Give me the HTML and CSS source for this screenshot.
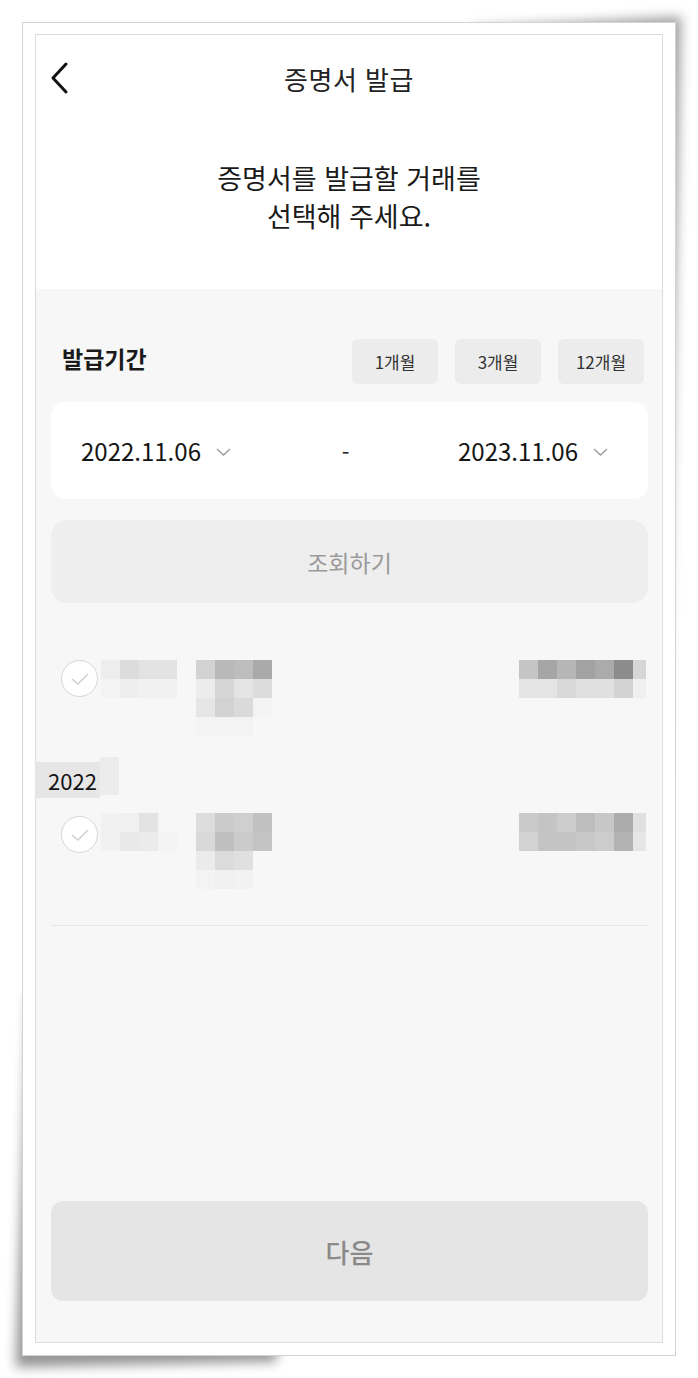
FILE: index.html
```html
<!DOCTYPE html>
<html lang="ko">
<head>
<meta charset="utf-8">
<title>증명서 발급</title>
<link rel="stylesheet" href="styles.css">
</head>
<body>
<div class="frame">
  <div class="screen">
    <header class="topbar">
      <button class="back" aria-label="뒤로">
        <svg width="20" height="32" viewBox="0 0 20 32"><path d="M16 2 L3 16 L16 30" fill="none" stroke="#111" stroke-width="3" stroke-linecap="round" stroke-linejoin="round"/></svg>
      </button>
      <h1 class="title">증명서 발급</h1>
    </header>
    <p class="intro">증명서를 발급할 거래를<br>선택해 주세요.</p>

    <section class="body">
      <div class="period-row">
        <h2 class="period-label">발급기간</h2>
        <div class="period-btns">
          <button class="chip">1개월</button>
          <button class="chip">3개월</button>
          <button class="chip">12개월</button>
        </div>
      </div>

      <div class="date-card">
        <div class="date"><span>2022.11.06</span>
          <svg class="chev" width="15" height="8" viewBox="0 0 15 8"><path d="M1 1 L7.5 7 L14 1" fill="none" stroke="#9a9a9a" stroke-width="1.3"/></svg>
        </div>
        <span class="dash">-</span>
        <div class="date"><span>2023.11.06</span>
          <svg class="chev" width="15" height="8" viewBox="0 0 15 8"><path d="M1 1 L7.5 7 L14 1" fill="none" stroke="#9a9a9a" stroke-width="1.3"/></svg>
        </div>
      </div>

      <button class="search">조회하기</button>

      <div class="list">
        <div class="item item-first">
          <span class="check"><svg width="22" height="18" viewBox="0 0 22 18"><path d="M3 9 L9 14 L19 4" fill="none" stroke="#cfcfcf" stroke-width="1.5"/></svg></span>
          <div class="mosaic m4">
            <i style="background:#ededed"></i><i style="background:#dcdcdc"></i><i style="background:#e3e3e3"></i><i style="background:#e3e3e3"></i>
            <i style="background:#f3f3f3"></i><i style="background:#eeeeee"></i><i style="background:#f1f1f1"></i><i style="background:#f1f1f1"></i>
          </div>
          <div class="mosaic m4 second">
            <i style="background:#d3d3d3"></i><i style="background:#b9b9b9"></i><i style="background:#bdbdbd"></i><i style="background:#aaaaaa"></i>
            <i style="background:#ececec"></i><i style="background:#d5d5d5"></i><i style="background:#e4e4e4"></i><i style="background:#dcdcdc"></i>
            <i style="background:#e6e6e6"></i><i style="background:#d2d2d2"></i><i style="background:#dadada"></i><i style="background:#f3f3f3"></i>
            <i style="background:#f4f4f4"></i><i style="background:#f3f3f3"></i><i style="background:#f3f3f3"></i><i style="background:#f7f7f7"></i>
          </div>
          <div class="mosaic m7 amount">
            <i style="background:#c5c5c5"></i><i style="background:#a6a6a6"></i><i style="background:#b6b6b6"></i><i style="background:#a2a2a2"></i><i style="background:#ababab"></i><i style="background:#8c8c8c"></i><i style="background:#d6d6d6"></i>
            <i style="background:#e4e4e4"></i><i style="background:#e4e4e4"></i><i style="background:#d8d8d8"></i><i style="background:#e0e0e0"></i><i style="background:#e0e0e0"></i><i style="background:#d3d3d3"></i><i style="background:#f0f0f0"></i>
          </div>
        </div>

        <div class="year-row">
          <span class="year">2022</span>
          <span class="year-px"></span>
        </div>

        <div class="item item-second">
          <span class="check"><svg width="22" height="18" viewBox="0 0 22 18"><path d="M3 9 L9 14 L19 4" fill="none" stroke="#cfcfcf" stroke-width="1.5"/></svg></span>
          <div class="mosaic m4">
            <i style="background:#f1f1f1"></i><i style="background:#f0f0f0"></i><i style="background:#e3e3e3"></i><i style="background:#f6f6f6"></i>
            <i style="background:#f1f1f1"></i><i style="background:#e9e9e9"></i><i style="background:#ebebeb"></i><i style="background:#f3f3f3"></i>
          </div>
          <div class="mosaic m4 second">
            <i style="background:#dddddd"></i><i style="background:#cbcbcb"></i><i style="background:#cfcfcf"></i><i style="background:#c1c1c1"></i>
            <i style="background:#d8d8d8"></i><i style="background:#bfbfbf"></i><i style="background:#cbcbcb"></i><i style="background:#c4c4c4"></i>
            <i style="background:#ebebeb"></i><i style="background:#dbdbdb"></i><i style="background:#e0e0e0"></i><i style="background:#f7f7f7"></i>
            <i style="background:#f3f3f3"></i><i style="background:#f0f0f0"></i><i style="background:#f2f2f2"></i><i style="background:#f7f7f7"></i>
          </div>
          <div class="mosaic m7 amount">
            <i style="background:#cacaca"></i><i style="background:#c4c4c4"></i><i style="background:#cdcdcd"></i><i style="background:#bdbdbd"></i><i style="background:#c7c7c7"></i><i style="background:#ababab"></i><i style="background:#e0e0e0"></i>
            <i style="background:#d2d2d2"></i><i style="background:#c4c4c4"></i><i style="background:#c4c4c4"></i><i style="background:#c8c8c8"></i><i style="background:#cccccc"></i><i style="background:#b3b3b3"></i><i style="background:#e6e6e6"></i>
          </div>
        </div>

        <hr class="divider">
      </div>

      <button class="next">다음</button>
    </section>
  </div>
</div>
</body>
</html>
```

FILE: styles.css
```css
* { box-sizing: border-box; }
html, body { margin: 0; padding: 0; }
body {
  font-family: "Noto Sans CJK KR", "Noto Sans", sans-serif;
  color: #111;
  padding: 22px 0 22px 22px;
  background: #fff;
  min-height: 1378px;
}
button { font-family: inherit; border: 0; cursor: pointer; }

.frame {
  position: relative;
  width: 654px;
  height: 1334px;
  background: #fff;
  border: 1px solid #d3d3d3;
  padding: 11px 12px 12px 12px;
}
/* paper-curl shadows behind the frame */
.frame::before {
  content: "";
  position: absolute;
  top: 1px;
  right: 1px;
  width: 32%;
  height: 78%;
  box-shadow: 7px -7px 12px rgba(0,0,0,0.38);
  transform-origin: top right;
  transform: skew(-1.2deg, -3deg);
  z-index: -1;
}
.frame::after {
  content: "";
  position: absolute;
  bottom: 0;
  left: 0;
  width: 40%;
  height: 28%;
  box-shadow: -7px 12px 12px rgba(0,0,0,0.42);
  transform-origin: bottom left;
  transform: skew(-2deg, -1.2deg);
  z-index: -1;
}

.screen {
  width: 628px;
  height: 1309px;
  border: 1px solid #dcdcdc;
  display: flex;
  flex-direction: column;
  background: #fff;
}

.topbar {
  height: 86px;
  display: flex;
  align-items: center;
  justify-content: center;
  position: relative;
}
.back {
  position: absolute;
  left: 14px;
  top: 27px;
  background: none;
  padding: 0;
  width: 20px;
  height: 32px;
}
.title {
  margin: 0;
  font-size: 26px;
  font-weight: 400;
  color: #222;
  letter-spacing: 0.5px;
}

.intro {
  margin: 0;
  padding: 38px 0 54px;
  text-align: center;
  font-size: 27px;
  line-height: 38px;
  color: #1a1a1a;
}

.body {
  flex: 1;
  background: #f7f7f7;
  padding: 50px 14px 41px 15px;
  display: flex;
  flex-direction: column;
}

.period-row {
  display: flex;
  align-items: center;
  justify-content: space-between;
  height: 45px;
}
.period-label {
  margin: -8px 0 0 11px;
  font-size: 23px;
  font-weight: 700;
  color: #1a1a1a;
}
.period-btns { display: flex; gap: 17px; margin-right: 4px; }
.chip {
  width: 86px;
  height: 45px;
  border-radius: 6px;
  background: #ececec;
  font-size: 17px;
  color: #333;
  padding: 0;
}

.date-card {
  margin-top: 18px;
  height: 97px;
  background: #fff;
  border-radius: 14px;
  display: flex;
  align-items: center;
  justify-content: space-between;
  padding: 0 40px 0 30px;
}
.date {
  display: flex;
  align-items: center;
  gap: 15px;
  font-size: 24px;
  color: #151515;
}
.chev { margin-top: 2px; }
.dash { font-size: 22px; color: #222; margin-left: 2px; }

.search {
  margin-top: 21px;
  height: 83px;
  border-radius: 16px;
  background: #eeeeee;
  font-size: 23px;
  color: #9a9a9a;
  width: 100%;
}

.list { margin-top: 57px; }
.item {
  display: flex;
  align-items: flex-start;
  padding-left: 10px;
}
.item-first { height: 77px; }
.item-second { height: 76px; margin-top: 15px; }
.item-second .check { margin-top: 3px; }
.check {
  width: 37px;
  height: 37px;
  border-radius: 50%;
  border: 1.5px solid #d6d6d6;
  background: #fff;
  display: flex;
  align-items: center;
  justify-content: center;
  flex: none;
}
.check svg { margin-top: 1px; }
.mosaic {
  display: grid;
  grid-auto-rows: 19px;
  margin-left: 3px;
}
.mosaic i { display: block; }
.m4 { grid-template-columns: repeat(4, 19px); }
.m7 { grid-template-columns: repeat(6, 19px) 13px; }
.mosaic.second { margin-left: 19px; }
.mosaic.amount { margin-left: auto; margin-right: 2px; }

.year-row {
  margin-top: 25px;
  display: flex;
  align-items: center;
  margin-left: -16px;
}
.year {
  width: 65px;
  height: 36px;
  background: #e6e6e6;
  font-size: 22px;
  line-height: 36px;
  padding-left: 13px;
  color: #151515;
}
.year-px {
  width: 19px;
  height: 38px;
  background: #ececec;
  margin-top: -8px;
}

.divider {
  margin: 36px 0 0;
  border: 0;
  border-top: 1px solid #e6e6e6;
}

.next {
  margin-top: auto;
  height: 100px;
  width: 100%;
  border-radius: 12px;
  background: #e5e5e5;
  font-size: 26px;
  font-weight: 500;
  color: #8a8a8a;
}
```
